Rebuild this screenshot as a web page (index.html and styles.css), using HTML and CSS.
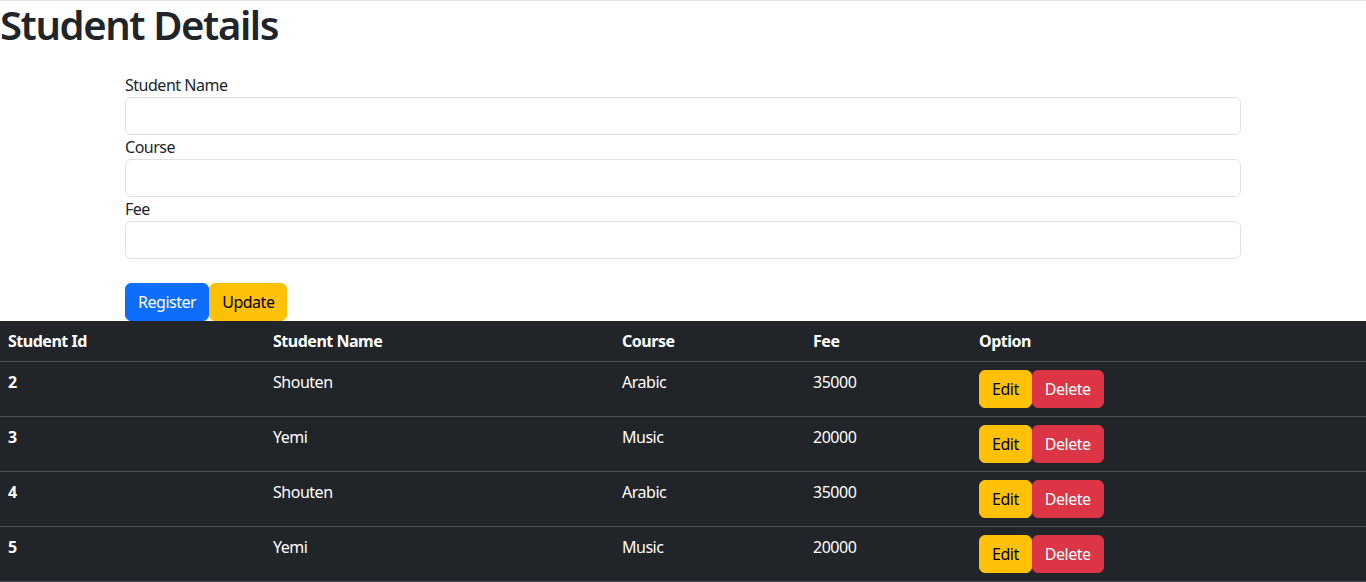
FILE: index.html
```html
<!DOCTYPE html>
<html lang="en">
<head>
<meta charset="utf-8">
<title>Student Details</title>
<link rel="stylesheet" href="styles.css">
</head>
<body>
<h1 class="title">Student Details</h1>
<div class="container">
  <form class="form">
    <label class="label" for="name">Student Name</label>
    <input class="control" id="name" type="text">
    <label class="label" for="course">Course</label>
    <input class="control" id="course" type="text">
    <label class="label" for="fee">Fee</label>
    <input class="control" id="fee" type="text">
    <div class="actions">
      <button type="button" class="btn btn-primary">Register</button><button type="button" class="btn btn-warning">Update</button>
    </div>
  </form>
</div>
<table class="table">
  <thead>
    <tr>
      <th class="c-id">Student Id</th>
      <th class="c-name">Student Name</th>
      <th class="c-course">Course</th>
      <th class="c-fee">Fee</th>
      <th class="c-opt">Option</th>
    </tr>
  </thead>
  <tbody>
    <tr>
      <th>2</th><td>Shouten</td><td>Arabic</td><td>35000</td>
      <td><button type="button" class="btn btn-warning">Edit</button><button type="button" class="btn btn-danger">Delete</button></td>
    </tr>
    <tr>
      <th>3</th><td>Yemi</td><td>Music</td><td>20000</td>
      <td><button type="button" class="btn btn-warning">Edit</button><button type="button" class="btn btn-danger">Delete</button></td>
    </tr>
    <tr>
      <th>4</th><td>Shouten</td><td>Arabic</td><td>35000</td>
      <td><button type="button" class="btn btn-warning">Edit</button><button type="button" class="btn btn-danger">Delete</button></td>
    </tr>
    <tr>
      <th>5</th><td>Yemi</td><td>Music</td><td>20000</td>
      <td><button type="button" class="btn btn-warning">Edit</button><button type="button" class="btn btn-danger">Delete</button></td>
    </tr>
  </tbody>
</table>
</body>
</html>
```
FILE: styles.css
```css
* { box-sizing: border-box; }
html, body { margin: 0; padding: 0; }
body {
  font-family: "Noto Sans", "Open Sans", sans-serif;
  font-size: 16px;
  line-height: 1.5;
  letter-spacing: -0.03em;
  color: #212529;
  background: #fff;
  border-top: 1px solid #dee2e6;
}
.title {
  margin: 0 0 8px;
  font-size: 40px;
  font-weight: 600;
  line-height: 1.2;
  letter-spacing: -0.035em;
}
.container {
  padding: 16px 125px 0;
}
.form {
  display: flex;
  flex-direction: column;
}
.label {
  display: block;
  line-height: 24px;
}
.control {
  display: block;
  width: 100%;
  height: 38px;
  padding: 6px 12px;
  font: inherit;
  color: #212529;
  background: #fff;
  border: 1px solid #dee2e6;
  border-radius: 6px;
}
.actions {
  display: flex;
  margin-top: 24px;
}
.btn {
  display: inline-block;
  padding: 6px 12px;
  font: inherit;
  letter-spacing: inherit;
  line-height: 24px;
  border: 1px solid transparent;
  border-radius: 6px;
  cursor: pointer;
}
.btn-primary { background: #0d6efd; border-color: #0d6efd; color: #fff; }
.btn-warning { background: #ffc107; border-color: #ffc107; color: #000; }
.btn-danger { background: #dc3545; border-color: #dc3545; color: #fff; }
.table {
  width: 100%;
  border-collapse: collapse;
  background: #212529;
  color: #fff;
}
.table th, .table td {
  padding: 8px;
  text-align: left;
  vertical-align: top;
  border-bottom: 1px solid #4d5154;
  line-height: 24px;
}
.table th { font-weight: 700; }
.table td .btn { vertical-align: top; }
.c-id { width: 265px; }
.c-name { width: 349px; }
.c-course { width: 191px; }
.c-fee { width: 166px; }
```
